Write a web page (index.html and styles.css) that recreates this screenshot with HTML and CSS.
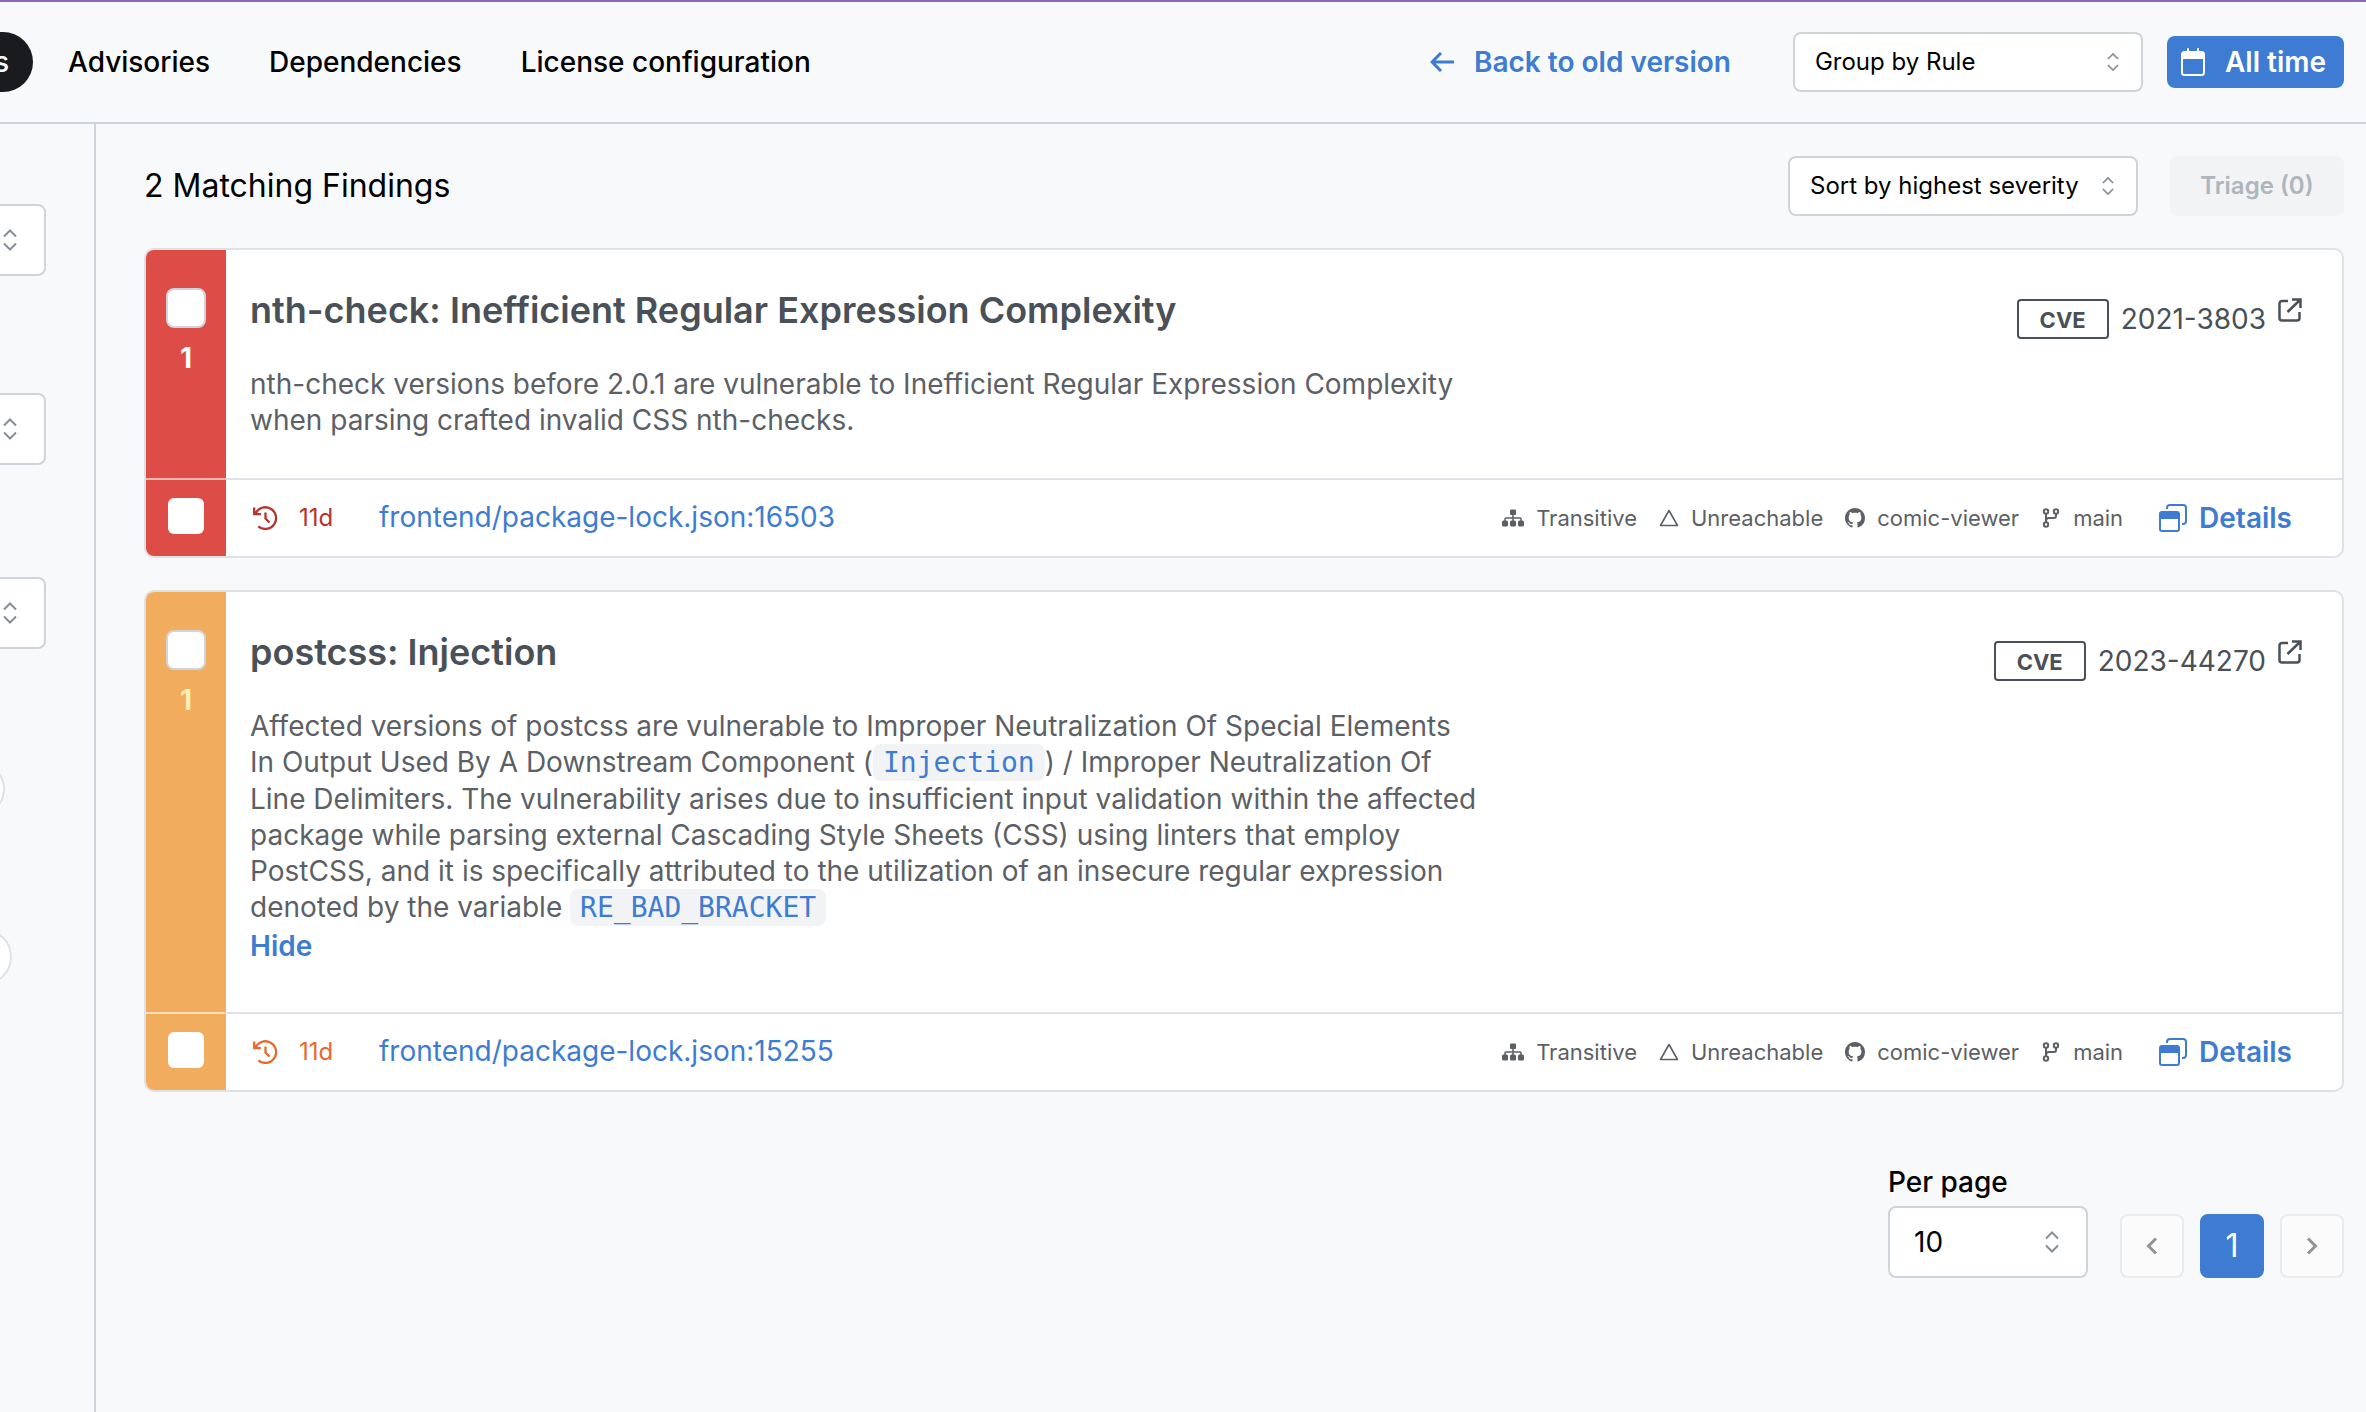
FILE: index.html
```html
<!DOCTYPE html>
<html lang="en">
<head>
<meta charset="utf-8">
<title>Findings</title>
<link rel="stylesheet" href="styles.css">
</head>
<body>
<svg class="sprite" aria-hidden="true">
  <symbol id="i-updown" viewBox="0 0 14 22"><path d="M1 7.500l6-6 6 6M1 14.500l6 6 6-6" fill="none" stroke="currentColor" stroke-width="2"/></symbol>
  <symbol id="i-back" viewBox="0 0 24 20"><path d="M11 1L2 10l9 9M2 10h22" fill="none" stroke="currentColor" stroke-width="3"/></symbol>
  <symbol id="i-calendar" viewBox="0 0 24 28"><path fill="currentColor" fill-rule="evenodd" d="M6 1a1 1 0 0 1 2 0v2h8V1a1 1 0 0 1 2 0v2h2.500A3.500 3.500 0 0 1 24 6.500v18a3.500 3.500 0 0 1-3.500 3.500h-17A3.500 3.500 0 0 1 0 24.500v-18A3.500 3.500 0 0 1 3.500 3H6zM2 11v13.500A1.500 1.500 0 0 0 3.500 26h17a1.500 1.500 0 0 0 1.500-1.500V11z"/></symbol>
  <symbol id="i-external" viewBox="0 0 24 24"><path d="M10 3H4a2.500 2.500 0 0 0-2.500 2.500V20A2.500 2.500 0 0 0 4 22.500h15a2.500 2.500 0 0 0 2.500-2.500V14M14 1.500h8.500V10M22.500 1.500L9.500 14" fill="none" stroke="currentColor" stroke-width="2.500"/></symbol>
  <symbol id="i-history" viewBox="0 0 24 24"><path d="M2.500 7.500a10.800 10.800 0 1 1 2.800 12.800M1.200 1.500v6.700h6.700M12.500 6.500v6l4 4" fill="none" stroke="currentColor" stroke-width="2.300"/></symbol>
  <symbol id="i-tree" viewBox="0 0 22 17"><g fill="currentColor"><rect x="8" y="0" width="6" height="5.500" rx="1"/><rect x="0" y="11" width="6" height="6" rx="1.500"/><rect x="8" y="11" width="6" height="6" rx="1.500"/><rect x="16" y="11" width="6" height="6" rx="1.500"/></g><path d="M11 5v7M3 12V9.500q0-1 1-1h14q1 0 1 1V12" fill="none" stroke="currentColor" stroke-width="1.500"/></symbol>
  <symbol id="i-triangle" viewBox="0 0 20 18"><path d="M10 1.500L18.500 16.500H1.500z" fill="none" stroke="currentColor" stroke-width="1.600" stroke-linejoin="round"/></symbol>
  <symbol id="i-github" viewBox="0 0 16 16"><path fill="currentColor" d="M8 0C3.580 0 0 3.580 0 8c0 3.540 2.290 6.530 5.470 7.590.4.070.55-.17.55-.38 0-.19-.01-.82-.01-1.490-2.010.37-2.530-.49-2.690-.94-.09-.23-.48-.94-.82-1.130-.28-.15-.68-.52-.01-.53.63-.01 1.080.58 1.230.82.72 1.210 1.870.87 2.330.66.070-.52.28-.87.51-1.070-1.780-.2-3.640-.89-3.640-3.950 0-.87.31-1.590.82-2.150-.08-.2-.36-1.020.08-2.120 0 0 .67-.21 2.200.82.64-.18 1.320-.27 2-.27.68 0 1.360.09 2 .27 1.530-1.040 2.200-.82 2.200-.82.44 1.100.16 1.920.08 2.120.51.56.82 1.270.82 2.150 0 3.070-1.870 3.750-3.650 3.950.29.25.54.73.54 1.480 0 1.070-.01 1.930-.01 2.200 0 .21.15.46.55.38A8.013 8.013 0 0 0 16 8c0-4.420-3.580-8-8-8z"/></symbol>
  <symbol id="i-branch" viewBox="0 0 18 20"><g fill="none" stroke="currentColor" stroke-width="2"><circle cx="4" cy="3.500" r="2.200"/><circle cx="4" cy="16.500" r="2.200"/><circle cx="14" cy="3.500" r="2.200"/><path d="M4 5.700v8.600M14 5.700V8q0 2-2 2H7q-3 0-3 3"/></g></symbol>
  <symbol id="i-windows" viewBox="0 0 28 28"><path fill="none" stroke="currentColor" stroke-width="2" d="M8 5V4a3 3 0 0 1 3-3H24A3 3 0 0 1 27 4v13a3 3 0 0 1-3 3h-1"/><path fill="currentColor" fill-rule="evenodd" d="M3 7h15a3 3 0 0 1 3 3v15a3 3 0 0 1-3 3H3a3 3 0 0 1-3-3V10a3 3 0 0 1 3-3zM2 15v10q0 1 1 1h15q1 0 1-1V15z"/></symbol>
  <symbol id="i-prev" viewBox="0 0 12 18"><path d="M10 1.500L2.500 9l7.500 7.500" fill="none" stroke="currentColor" stroke-width="3"/></symbol>
  <symbol id="i-next" viewBox="0 0 12 18"><path d="M2 1.500L9.500 9 2 16.500" fill="none" stroke="currentColor" stroke-width="3"/></symbol>
</svg>

<header class="topbar">
  <nav class="tabs">
    <a class="tab tab-active" href="#">Vulnerabilities</a>
    <a class="tab" href="#">Advisories</a>
    <a class="tab" href="#">Dependencies</a>
    <a class="tab" href="#">License configuration</a>
  </nav>
  <div class="actions">
    <a class="back" href="#"><svg class="ic-back"><use href="#i-back"/></svg>Back to old version</a>
    <span class="field field-wide"><select aria-label="Group by"><option>Group by Rule</option></select><svg class="ic-updown"><use href="#i-updown"/></svg></span>
    <button class="period"><svg class="ic-calendar"><use href="#i-calendar"/></svg>All time</button>
  </div>
</header>

<div class="layout">
  <aside class="filters">
    <span class="field field-tall field-first"><select aria-label="Project"><option></option></select><svg class="ic-updown"><use href="#i-updown"/></svg></span>
    <span class="field field-tall"><select aria-label="Branch"><option></option></select><svg class="ic-updown"><use href="#i-updown"/></svg></span>
    <span class="field field-tall"><select aria-label="Status"><option></option></select><svg class="ic-updown"><use href="#i-updown"/></svg></span>
    <button class="chip chip-short" aria-label="Severity"></button>
    <button class="chip" aria-label="Reachability"></button>
  </aside>

  <main class="main">
    <div class="toolbar">
      <h1 class="count">2 Matching Findings</h1>
      <span class="field field-wide"><select aria-label="Sort"><option>Sort by highest severity</option></select><svg class="ic-updown"><use href="#i-updown"/></svg></span>
      <button class="triage" disabled>Triage (0)</button>
    </div>

    <article class="card card-high">
      <div class="rail">
        <input class="check check-group" type="checkbox" aria-label="Select nth-check">
        <span class="rail-count">1</span>
      </div>
      <div class="summary">
        <div class="text">
          <h2 class="title">nth-check: Inefficient Regular Expression Complexity</h2>
          <p class="desc">nth-check versions before 2.0.1 are vulnerable to Inefficient Regular Expression Complexity<br>when parsing crafted invalid CSS nth-checks.</p>
        </div>
        <a class="cve" href="#"><span class="cve-tag">CVE</span>2021-3803<svg class="ic-external"><use href="#i-external"/></svg></a>
      </div>
      <div class="rail rail-row"><input class="check" type="checkbox" aria-label="Select finding"></div>
      <div class="finding">
        <svg class="ic-history"><use href="#i-history"/></svg><span class="age">11d</span>
        <a class="path" href="#">frontend/package-lock.json:16503</a>
        <span class="meta"><svg class="ic-tree"><use href="#i-tree"/></svg>Transitive</span>
        <span class="meta"><svg class="ic-meta"><use href="#i-triangle"/></svg>Unreachable</span>
        <span class="meta"><svg class="ic-meta"><use href="#i-github"/></svg>comic-viewer</span>
        <span class="meta"><svg class="ic-meta"><use href="#i-branch"/></svg>main</span>
        <button class="details"><svg class="ic-windows"><use href="#i-windows"/></svg>Details</button>
      </div>
    </article>

    <article class="card card-medium">
      <div class="rail">
        <input class="check check-group" type="checkbox" aria-label="Select postcss">
        <span class="rail-count">1</span>
      </div>
      <div class="summary">
        <div class="text">
          <h2 class="title">postcss: Injection</h2>
          <p class="desc">Affected versions of postcss are vulnerable to Improper Neutralization Of Special Elements<br>In Output Used By A Downstream Component (<code>Injection</code>) / Improper Neutralization Of<br>Line Delimiters. The vulnerability arises due to insufficient input validation within the affected<br>package while parsing external Cascading Style Sheets (CSS) using linters that employ<br>PostCSS, and it is specifically attributed to the utilization of an insecure regular expression<br>denoted by the variable <code>RE_BAD_BRACKET</code></p>
          <button class="hide">Hide</button>
        </div>
        <a class="cve" href="#"><span class="cve-tag">CVE</span>2023-44270<svg class="ic-external"><use href="#i-external"/></svg></a>
      </div>
      <div class="rail rail-row"><input class="check" type="checkbox" aria-label="Select finding"></div>
      <div class="finding">
        <svg class="ic-history"><use href="#i-history"/></svg><span class="age">11d</span>
        <a class="path" href="#">frontend/package-lock.json:15255</a>
        <span class="meta"><svg class="ic-tree"><use href="#i-tree"/></svg>Transitive</span>
        <span class="meta"><svg class="ic-meta"><use href="#i-triangle"/></svg>Unreachable</span>
        <span class="meta"><svg class="ic-meta"><use href="#i-github"/></svg>comic-viewer</span>
        <span class="meta"><svg class="ic-meta"><use href="#i-branch"/></svg>main</span>
        <button class="details"><svg class="ic-windows"><use href="#i-windows"/></svg>Details</button>
      </div>
    </article>

    <footer class="pager">
      <div class="per-page">
        <label for="per-page">Per page</label>
        <span class="field field-tall"><select id="per-page"><option>10</option></select><svg class="ic-updown"><use href="#i-updown"/></svg></span>
      </div>
      <div class="pages">
        <button class="page" disabled aria-label="Previous"><svg class="ic-chev"><use href="#i-prev"/></svg></button>
        <button class="page page-current">1</button>
        <button class="page" disabled aria-label="Next"><svg class="ic-chev"><use href="#i-next"/></svg></button>
      </div>
    </footer>
  </main>
</div>
</body>
</html>
```

FILE: styles.css
```css
* { box-sizing: border-box; }

body {
  margin: 0;
  min-height: 100vh;
  display: flex;
  flex-direction: column;
  overflow-x: hidden;
  background: #f8f9fb;
  color: #000;
  font: 28px/36px Inter, "Liberation Sans", sans-serif;
}

a { color: inherit; text-decoration: none; }
button, select, input { font: inherit; color: inherit; margin: 0; }
button { border: 0; background: none; padding: 0; }
svg { display: block; flex: none; }
.sprite { position: absolute; width: 0; height: 0; }

.topbar {
  display: flex;
  align-items: center;
  justify-content: space-between;
  height: 124px;
  padding-right: 22px;
  border-top: 2px solid #9067c0;
  border-bottom: 2px solid #ced4da;
}
.tabs { display: flex; align-items: center; gap: 11px; margin-left: -232px; }
.tab { padding: 12px 24px; line-height: 36px; font-weight: 500; }
.tab-active { border-radius: 30px; background: #1a1b1e; color: #fff; width: 265px; text-align: right; }
.actions { display: flex; align-items: center; gap: 24px; }
.back { display: flex; align-items: center; gap: 20px; margin-right: 38px; color: #3d7cd2; font-weight: 600; }

.field { position: relative; display: block; }
.field select {
  appearance: none;
  display: block;
  width: 100%;
  height: 60px;
  padding: 0 20px;
  border: 2px solid #ced4da;
  border-radius: 8px;
  background: #fff;
  font-size: 24px;
}
.field .ic-updown { position: absolute; right: 24px; top: 50%; margin-top: -10px; width: 12px; height: 20px; color: #868e96; pointer-events: none; }
.field-wide { width: 350px; }
.field-tall select { height: 72px; padding: 0 24px; font-size: 28px; }
.field-tall .ic-updown { right: 29px; width: 14px; height: 22px; margin-top: -11px; }

.period {
  display: flex;
  align-items: center;
  gap: 20px;
  height: 52px;
  padding: 0 18px 0 14px;
  border-radius: 8px;
  background: #3d7cd2;
  color: #fff;
  font-weight: 600;
}

.layout { display: flex; flex: 1; }
.filters {
  flex: none;
  width: 96px;
  padding-top: 80px;
  border-right: 2px solid #ced4da;
  display: flex;
  flex-direction: column;
  gap: 112px;
}
.filters .field { width: 246px; margin-left: -200px; }
.filters .field-first { margin-bottom: 5px; }
.chip { width: 140px; height: 56px; margin-left: -128px; border: 2px solid #dee2e6; border-radius: 28px; background: #fff; }
.chip-short { width: 133px; }

.main { flex: 1; min-width: 0; padding: 32px 22px 32px 48px; }
.toolbar { display: flex; align-items: center; gap: 32px; margin-bottom: 32px; }
.count { flex: 1; margin: 0; font-size: 32px; font-weight: 400; }
.triage { width: 174px; height: 60px; border-radius: 8px; background: #f1f3f5; color: #adb5bd; font-size: 24px; font-weight: 600; }

.card {
  display: grid;
  grid-template-columns: 80px 1fr;
  margin-bottom: 32px;
  border: 2px solid #dee2e6;
  border-radius: 10px;
  background: #fff;
  overflow: hidden;
}
.rail { display: flex; flex-direction: column; align-items: center; padding-top: 38px; background: #dd4c46; color: #fff; }
.card-medium .rail { background: #f2ac5e; color: #ffeeb5; }
.card .rail-row { justify-content: center; padding: 0 0 4px; border-top: 2px solid rgb(255 255 255 / 60%); background-clip: border-box; }
.rail-count { margin-top: 12px; font-size: 28px; font-weight: 700; line-height: 36px; }
.check { appearance: none; width: 36px; height: 36px; border-radius: 6px; background: #fff; }
.check-group { width: 40px; height: 40px; border: 2px solid #ced4da; border-radius: 8px; }

.summary { display: flex; justify-content: space-between; padding: 34px 40px 40px 24px; }
.title { margin: 0; color: #495057; font-size: 36px; line-height: 52px; font-weight: 600; }
.desc { margin: 30px 0 0; color: #5c5f66; line-height: 36px; }
.desc code { padding: 2px 10px; border-radius: 8px; background: #f1f3f5; color: #3d7cd2; font: 28px/36px "DejaVu Sans Mono", "Liberation Mono", monospace; }
.hide { display: block; margin: 2px 0 8px; color: #3d7cd2; font-weight: 600; }
.cve { display: flex; align-items: center; align-self: flex-start; gap: 12px; margin-top: 14px; color: #495057; }
.cve-tag { width: 92px; height: 40px; border: 2px solid #495057; border-radius: 4px; text-align: center; font-size: 22px; font-weight: 700; line-height: 38px; }

.finding {
  display: flex;
  align-items: center;
  gap: 22px;
  height: 78px;
  padding: 0 50px 0 27px;
  border-top: 2px solid #dee2e6;
}
.ic-history, .age { color: #b8322b; }
.card-medium .ic-history, .card-medium .age { color: #e8692a; }
.age { width: 38px; font-size: 24px; }
.path { flex: 1; margin-left: 20px; padding-bottom: 2px; color: #3d7cd2; }
.meta { display: flex; align-items: center; gap: 12px; color: #5c5f66; font-size: 22px; }
.details { display: flex; align-items: center; gap: 12px; margin-left: 14px; color: #3d7cd2; font-weight: 600; }

.ic-back { width: 24px; height: 20px; }
.ic-calendar { width: 24px; height: 28px; }
.ic-external { width: 24px; height: 24px; margin-bottom: 18px; }
.ic-history { width: 24px; height: 24px; }
.ic-tree { width: 22px; height: 18px; }
.ic-meta { width: 20px; height: 20px; }
.ic-windows { width: 28px; height: 28px; }
.ic-chev { width: 12px; height: 18px; }

.pager { display: flex; justify-content: flex-end; align-items: flex-end; gap: 32px; margin-top: 70px; }
.per-page { width: 200px; }
.per-page label { display: block; margin-bottom: 4px; font-weight: 500; line-height: 40px; }
.pages { display: flex; gap: 16px; }
.page { display: flex; align-items: center; justify-content: center; width: 64px; height: 64px; border: 2px solid #e9ecef; border-radius: 8px; background: #fbfbfb; color: #909296; }
.page-current { border-color: #3d7cd2; background: #3d7cd2; color: #fff; font-size: 32px; }
```
